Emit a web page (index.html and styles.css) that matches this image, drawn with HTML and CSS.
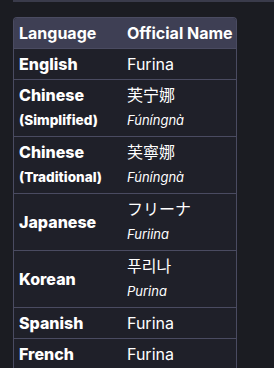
FILE: index.html
```html
<!DOCTYPE html>
<html>
<head>
<meta charset="utf-8">
<link rel="stylesheet" href="styles.css">
</head>
<body>
<div class="page">
  <div class="topline"></div>
  <table class="names">
    <colgroup><col class="c1"><col class="c2"></colgroup>
    <thead>
      <tr><th>Language</th><th>Official Name</th></tr>
    </thead>
    <tbody>
      <tr><td class="lang">English</td><td>Furina</td></tr>
      <tr>
        <td class="lang"><div class="l1">Chinese</div><div class="l2">(Simplified)</div></td>
        <td><div class="l1 sc">芙宁娜</div><div class="l2 it">Fúníngnà</div></td>
      </tr>
      <tr>
        <td class="lang"><div class="l1">Chinese</div><div class="l2">(Traditional)</div></td>
        <td><div class="l1 tc">芙寧娜</div><div class="l2 it">Fúníngnà</div></td>
      </tr>
      <tr>
        <td class="lang">Japanese</td>
        <td><div class="l1 jp">フリーナ</div><div class="l2 it">Furiina</div></td>
      </tr>
      <tr>
        <td class="lang">Korean</td>
        <td><div class="l1 kr">푸리나</div><div class="l2 it">Purina</div></td>
      </tr>
      <tr><td class="lang">Spanish</td><td>Furina</td></tr>
      <tr><td class="lang">French</td><td>Furina</td></tr>
    </tbody>
  </table>
</div>
</body>
</html>
```
FILE: styles.css
```css
html, body {
  margin: 0;
  padding: 0;
  background: #1b1c22;
  height: 100%;
  overflow: hidden;
}
.page {
  padding-left: 13px;
  font-family: Inter, "Noto Sans", sans-serif;
  color: #ffffff;
}
.topline {
  height: 2px;
  background: #3a3b4b;
  margin-bottom: 15px;
}
.names {
  width: 224px;
  table-layout: fixed;
  border-collapse: separate;
  border-spacing: 0;
  background: #1f2029;
  border: 1px solid #4a4b61;
  border-bottom: none;
  border-radius: 4px 4px 0 0;
  font-size: 16px;
  line-height: 24px;
}
.c1 { width: 108px; }
.names th {
  background: #3e3f54;
  font-weight: 700;
  text-align: left;
  padding: 3px 0 3px 5px;
  border-bottom: 1px solid #4a4b61;
  white-space: nowrap;
  overflow: visible;
}
.names th:first-child { border-top-left-radius: 3px; }
.names th:last-child { border-top-right-radius: 3px; }
.names td {
  padding: 3px 0 3px 5px;
  vertical-align: middle;
  border-bottom: 1px solid #4a4b61;
  white-space: nowrap;
}
.names td.lang { font-weight: 800; }
.l1 { line-height: 24px; }
.l2 { font-size: 13.6px; line-height: 26px; }
.it { font-style: italic; font-size: 13px; }
.sc { font-family: Inter, "Noto Sans CJK SC", sans-serif; }
.tc { font-family: Inter, "Noto Sans CJK TC", sans-serif; }
.jp { font-family: Inter, "Noto Sans CJK JP", sans-serif; }
.kr { font-family: Inter, "Noto Sans CJK KR", sans-serif; }
```
